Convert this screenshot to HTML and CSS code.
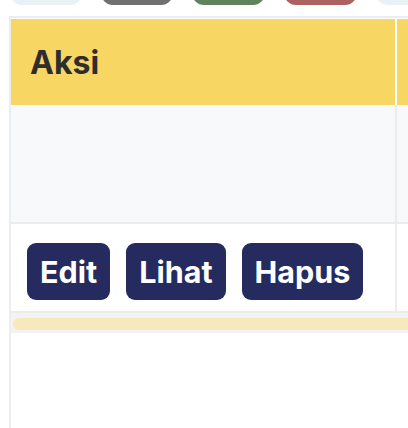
FILE: index.html
```html
<!DOCTYPE html>
<html lang="id">
<head>
    <meta charset="UTF-8">
    <meta name="viewport" content="width=device-width, initial-scale=1.0">
    <title>Data</title>
    <link rel="stylesheet" href="styles.css">
</head>
<body>
    <div class="page">
        <div class="toolbar">
            <span class="pill pill-light"></span>
            <span class="pill pill-gray"></span>
            <span class="pill pill-green"></span>
            <span class="pill pill-red"></span>
            <span class="pill pill-light"></span>
        </div>

        <div class="card">
            <div class="table_wrap">
                <table class="list">
                    <thead>
                        <tr>
                            <th class="col_aksi">Aksi</th>
                            <th></th>
                        </tr>
                    </thead>
                    <tbody>
                        <tr class="row_empty">
                            <td></td>
                            <td></td>
                        </tr>
                        <tr class="row_action">
                            <td>
                                <div class="actions">
                                    <a href="#" class="btn">Edit</a>
                                    <a href="#" class="btn">Lihat</a>
                                    <a href="#" class="btn">Hapus</a>
                                </div>
                            </td>
                            <td></td>
                        </tr>
                    </tbody>
                </table>
            </div>
            <div class="scroll_track">
                <div class="scroll_thumb"></div>
            </div>
        </div>
    </div>
</body>
</html>
```

FILE: styles.css
```css
body{
  margin:0;
  background:#fff;
  font-family:Inter, "Noto Sans", sans-serif;
  overflow:hidden;
}
.page{
  padding-left:9px;
  overflow:hidden;
}
.toolbar{
  display:flex;
  gap:19px;
  margin-top:-30px;
  padding-left:1px;
  overflow:hidden;
}
.pill{
  display:block;
  flex:0 0 72px;
  height:35px;
  border-radius:12px;
}
.pill-light{ background:#e9f1f4; }
.pill-gray{ background:#707070; }
.pill-green{ background:#5f835d; flex-basis:73px; }
.pill-red{ background:#ac6260; flex-basis:73px; }

.card{
  margin-top:11px;
  border-top:solid 2px #ebedee;
  border-left:solid 2px #ebedee;
  height:420px;
  overflow:hidden;
}
.table_wrap{
  overflow:hidden;
  padding-top:1px;
}
.list{
  border-collapse:separate;
  border-spacing:0;
  width:500px;
}
.list th{
  background:#f8d664;
  color:#2d2d2d;
  font-size:32px;
  font-weight:700;
  text-align:left;
  height:86px;
  padding:0 19px;
  border-right:solid 2px #fff;
}
.list th.col_aksi{
  width:346px;
}
.list td{
  border-right:solid 2px #ececec;
  border-bottom:solid 2px #ececec;
  padding:0;
}
.row_empty td{
  background:#f8f9fb;
  height:117px;
}
.row_action td{
  height:87px;
  vertical-align:top;
}
.actions{
  display:flex;
  gap:16px;
  padding:19px 16px 0;
}
.btn{
  display:block;
  background:#252b5e;
  color:#fff;
  text-decoration:none;
  font-size:30.5px;
  font-weight:700;
  line-height:33px;
  padding:12px 13px;
  border-radius:9px;
}
.scroll_track{
  background:#f3f3f3;
  height:20px;
  padding:5px 0 3px 2px;
  box-sizing:border-box;
}
.scroll_thumb{
  background:#f6e9bb;
  height:12px;
  border-radius:6px;
  width:500px;
}
```
